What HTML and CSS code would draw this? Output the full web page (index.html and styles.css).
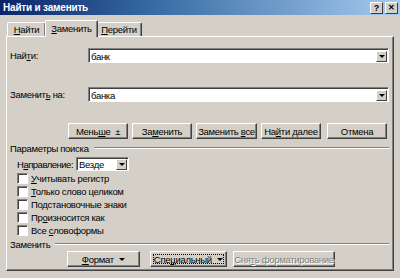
FILE: index.html
```html
<!DOCTYPE html>
<html lang="ru">
<head>
    <meta charset="UTF-8">
    <title>Найти и заменить</title>
    <link rel="stylesheet" href="styles.css">
</head>
<body>
    <div class="window">
        <div class="titlebar">
            <span class="title">Найти и заменить</span>
            <div class="title-buttons">
                <span class="tbtn">?</span>
                <span class="tbtn close">✕</span>
            </div>
        </div>

        <div class="tabs">
            <div class="tab t1"><u>Н</u>айти</div>
            <div class="tab t2 active"><u>З</u>аменить</div>
            <div class="tab t3"><u>П</u>ерейти</div>
        </div>

        <div class="panel">
            <div class="field-row first">
                <label class="field-label">Най<u>т</u>и:</label>
                <div class="combo"><span class="combo-text">банк</span><span class="drop"></span></div>
            </div>
            <div class="field-row second">
                <label class="field-label">Заменит<u>ь</u> на:</label>
                <div class="combo"><span class="combo-text">банка</span><span class="drop"></span></div>
            </div>

            <div class="btn-row top-buttons">
                <button class="btn w60">Мень<u>ш</u>е &nbsp;±</button>
                <button class="btn w60">За<u>м</u>енить</button>
                <button class="btn w61">Заменить <u>в</u>се</button>
                <button class="btn w60">На<u>й</u>ти далее</button>
                <button class="btn w60 cancel">Отмена</button>
            </div>

            <div class="group-title">
                <span>Параметры поиска</span>
                <span class="etched"></span>
            </div>

            <div class="direction">
                <span class="dir-label">Н<u>а</u>правление:</span>
                <div class="combo small"><span class="combo-text">Везде</span><span class="drop"></span></div>
            </div>

            <div class="checks">
                <div class="check"><span class="box"></span><span><u>У</u>читывать регистр</span></div>
                <div class="check"><span class="box"></span><span><u>Т</u>олько слово целиком</span></div>
                <div class="check"><span class="box"></span><span>По<u>д</u>становочные знаки</span></div>
                <div class="check"><span class="box"></span><span>Пр<u>о</u>износится как</span></div>
                <div class="check"><span class="box"></span><span>Все <u>с</u>ловоформы</span></div>
            </div>

            <div class="group-title replace">
                <span>Заменить</span>
                <span class="etched"></span>
            </div>

            <div class="btn-row bottom-buttons">
                <button class="btn w73"><u>Ф</u>ормат <span class="caret"></span></button>
                <button class="btn w77 focused">Спе<u>ц</u>иальный <span class="caret"></span></button>
                <button class="btn w102 disabled">Сня<u>т</u>ь форматирование</button>
            </div>
        </div>
    </div>
</body>
</html>
```

FILE: styles.css
```css
body {
    margin: 0;
    background-color: #d4d0c8;
    font-family: 'Liberation Sans', Arial, sans-serif;
    font-size: 9.5px;
    letter-spacing: -0.3px;
    color: #000;
    white-space: nowrap;
}
.window {
    width: 400px;
    height: 278px;
    overflow: hidden;
}
.titlebar {
    height: 15px;
    display: flex;
    align-items: center;
    justify-content: space-between;
    background: linear-gradient(to right, #0a246a, #3a6ea5 40%, #a6caf0);
    padding-left: 3px;
}
.title {
    color: #fff;
    font-weight: bold;
    font-size: 10px;
    letter-spacing: -0.2px;
}
.title-buttons {
    display: flex;
    gap: 2px;
    margin-right: 2px;
}
.tbtn {
    width: 11px;
    height: 10px;
    background: #d4d0c8;
    border-top: 1px solid #fff;
    border-left: 1px solid #fff;
    border-right: 1px solid #404040;
    border-bottom: 1px solid #404040;
    font-size: 9px;
    font-weight: bold;
    line-height: 10px;
    text-align: center;
    letter-spacing: 0;
}
.tbtn.close {
    font-size: 8px;
}

/* tabs */
.tabs {
    display: flex;
    align-items: flex-end;
    height: 17px;
    margin-top: 4px;
    padding-left: 7px;
}
.tab {
    box-sizing: border-box;
    height: 14px;
    line-height: 13px;
    text-align: center;
    border-top: 1px solid #fff;
    border-left: 1px solid #fff;
    border-right: 1px solid #404040;
    border-radius: 2px 2px 0 0;
    box-shadow: inset -1px 0 0 #808080;
}
.t1 { width: 39px; }
.t2 { width: 53px; }
.t3 { width: 45px; border-left: none; }
.tab.active {
    height: 17px;
    line-height: 15px;
    margin: 0 -1px -1px -1px;
    background: #d4d0c8;
    position: relative;
    z-index: 1;
}

/* tab panel */
.panel {
    box-sizing: border-box;
    width: 388px;
    height: 235px;
    margin-left: 6px;
    border-top: 1px solid #fff;
    border-left: 1px solid #fff;
    border-right: 1px solid #404040;
    border-bottom: 1px solid #404040;
    box-shadow: inset -1px -1px 0 #808080;
    padding: 0 4px 0 3px;
}
.field-row {
    display: flex;
    align-items: center;
}
.field-row.first {
    margin-top: 11px;
}
.field-row.second {
    margin-top: 24px;
}
.field-label {
    width: 78px;
}
.combo {
    flex: 1;
    box-sizing: border-box;
    height: 15px;
    display: flex;
    align-items: center;
    background: #fff;
    border-top: 1px solid #808080;
    border-left: 1px solid #808080;
    border-right: 1px solid #fff;
    border-bottom: 1px solid #fff;
    box-shadow: inset 1px 1px 0 #404040;
    padding: 1px 1px 0 2px;
}
.combo-text {
    flex: 1;
}
.drop {
    width: 11px;
    height: 11px;
    box-sizing: border-box;
    background: #d4d0c8;
    border-top: 1px solid #fff;
    border-left: 1px solid #fff;
    border-right: 1px solid #404040;
    border-bottom: 1px solid #404040;
    position: relative;
}
.drop::after {
    content: "";
    position: absolute;
    left: 2px;
    top: 3px;
    border-left: 3px solid transparent;
    border-right: 3px solid transparent;
    border-top: 3px solid #000;
}

/* buttons */
.btn-row {
    display: flex;
    padding-left: 58px;
}
.top-buttons {
    margin-top: 21px;
    gap: 4px;
}
.btn {
    box-sizing: border-box;
    height: 16px;
    padding: 0;
    font-family: inherit;
    font-size: 9.5px;
    letter-spacing: -0.3px;
    white-space: nowrap;
    background: #d4d0c8;
    color: #000;
    border-top: 1px solid #fff;
    border-left: 1px solid #fff;
    border-right: 1px solid #404040;
    border-bottom: 1px solid #404040;
    box-shadow: inset -1px -1px 0 #808080;
}
.w60 { width: 60px; }
.w61 { width: 61px; }
.w73 { width: 73px; }
.w77 { width: 77px; }
.w102 { width: 102px; }
.btn.cancel {
    margin-left: 2px;
}
.btn.focused {
    outline: 1px dotted #000;
    outline-offset: -4px;
}
.btn.disabled {
    color: #808080;
    text-shadow: 1px 1px 0 #fff;
}
.caret {
    display: inline-block;
    vertical-align: middle;
    margin-left: 3px;
    border-left: 3px solid transparent;
    border-right: 3px solid transparent;
    border-top: 3px solid #000;
}

/* group titles */
.group-title {
    display: flex;
    align-items: center;
    gap: 5px;
    height: 12px;
    margin-top: 3px;
}
.etched {
    flex: 1;
    height: 0;
    border-top: 1px solid #808080;
    border-bottom: 1px solid #fff;
}

.direction {
    display: flex;
    align-items: center;
    margin-top: 3px;
    padding-left: 7px;
}
.dir-label {
    width: 59px;
    letter-spacing: -0.5px;
}
.combo.small {
    flex: none;
    width: 53px;
    height: 14px;
}

.checks {
    margin-top: 1px;
    padding-left: 7px;
}
.check {
    display: flex;
    align-items: center;
    height: 13px;
    gap: 3px;
}
.box {
    box-sizing: border-box;
    width: 11px;
    height: 11px;
    background: #fff;
    border-top: 1px solid #808080;
    border-left: 1px solid #808080;
    border-right: 1px solid #fff;
    border-bottom: 1px solid #fff;
    box-shadow: inset 1px 1px 0 #404040;
}

.group-title.replace {
    margin-top: 1px;
}
.bottom-buttons {
    margin-top: 1px;
    padding-left: 57px;
}
.bottom-buttons .focused {
    margin-left: 10px;
}
.bottom-buttons .disabled {
    margin-left: 6px;
}
```
